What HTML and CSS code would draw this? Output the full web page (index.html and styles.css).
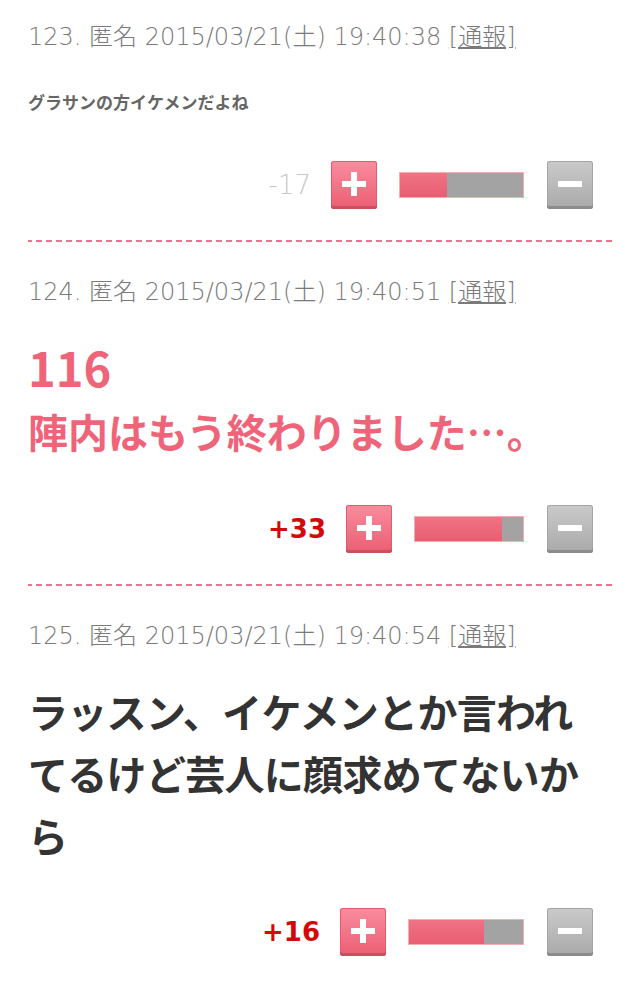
FILE: index.html
```html
<!DOCTYPE html>
<html lang="ja">
<head>
  <meta charset="UTF-8">
  <meta name="viewport" content="width=device-width, initial-scale=1.0">
  <title>コメント</title>
  <link rel="stylesheet" href="styles.css">
</head>
<body>
  <div class="comments">

    <div class="comment">
      <p class="comment-head">123. 匿名 2015/03/21(土) 19:40:38 <a href="#" class="report">[通報]</a></p>
      <div class="comment-body small">グラサンの方イケメンだよね</div>
      <div class="vote">
        <span class="score minus-score">-17</span>
        <button class="btn-plus" type="button"><span class="cross"></span></button>
        <div class="bar" style="width: 125px;"><div class="bar-fill" style="width: 38%;"></div></div>
        <button class="btn-minus" type="button"><span class="dash"></span></button>
      </div>
    </div>

    <div class="comment">
      <p class="comment-head">124. 匿名 2015/03/21(土) 19:40:51 <a href="#" class="report">[通報]</a></p>
      <div class="comment-body pink"><span class="num">116</span>陣内はもう終わりました…。</div>
      <div class="vote">
        <span class="score plus-score">+33</span>
        <button class="btn-plus" type="button"><span class="cross"></span></button>
        <div class="bar" style="width: 110px;"><div class="bar-fill" style="width: 81%;"></div></div>
        <button class="btn-minus" type="button"><span class="dash"></span></button>
      </div>
    </div>

    <div class="comment last">
      <p class="comment-head">125. 匿名 2015/03/21(土) 19:40:54 <a href="#" class="report">[通報]</a></p>
      <div class="comment-body large">ラッスン、イケメンとか言われてるけど芸人に顔求めてないから</div>
      <div class="vote">
        <span class="score plus-score">+16</span>
        <button class="btn-plus" type="button"><span class="cross"></span></button>
        <div class="bar" style="width: 116px;"><div class="bar-fill" style="width: 66%;"></div></div>
        <button class="btn-minus" type="button"><span class="dash"></span></button>
      </div>
    </div>

  </div>
</body>
</html>
```

FILE: styles.css
```css
body {
  margin: 0;
  background: #fff;
  font-family: "Noto Sans CJK JP", "Noto Sans", sans-serif;
}
.comments {
  padding: 0 46px 0 28px;
}
.comment {
  padding: 35px 20px 33px 0;
  margin-right: -20px;
  background-image: linear-gradient(to right, #e9768a 6px, transparent 6px);
  background-size: 10px 2px;
  background-repeat: repeat-x;
  background-position: -2px 100%;
}
.comment:first-child {
  padding-top: 22px;
}
.comment.last {
  background: none;
}
.comment-head {
  margin: 0;
  font-family: "DejaVu Sans", "Noto Sans CJK JP", sans-serif;
  font-size: 24px;
  line-height: 30px;
  font-weight: 200;
  color: #7a7a7a;
  white-space: nowrap;
}
.report {
  color: #7a7a7a;
  text-decoration: underline;
  text-underline-offset: 2px;
}
.comment-body {
  font-weight: 700;
}
.comment-body.small {
  margin-top: 37px;
  padding-bottom: 4px;
  font-size: 17px;
  line-height: 26px;
  color: #666;
}
.comment-body.pink {
  margin-top: 28px;
  font-size: 40px;
  line-height: 64px;
  color: #ef6479;
}
.comment-body.pink .num {
  display: block;
  font-size: 47px;
}
.comment-body.large {
  margin-top: 29px;
  font-size: 40px;
  letter-spacing: -0.7px;
  line-height: 62px;
  color: #333;
}
.vote {
  display: flex;
  justify-content: flex-end;
  align-items: center;
  margin-top: 42px;
}
.score {
  font-family: "DejaVu Sans", sans-serif;
  font-size: 26px;
  line-height: 48px;
  margin-right: 20px;
}
.minus-score {
  color: #c8c8c8;
  font-weight: 200;
}
.plus-score {
  color: #d40808;
  font-weight: 700;
}
.btn-plus, .btn-minus {
  position: relative;
  width: 46px;
  height: 48px;
  padding: 0;
  border: none;
  border-radius: 3px;
  cursor: pointer;
}
.btn-plus {
  background: linear-gradient(#f98d9e, #ec5d72);
  box-shadow: inset 0 -3px 0 #c9505f, inset 0 0 0 1px #e55a6e;
}
.btn-minus {
  margin-left: 23px;
  background: linear-gradient(#cacaca, #a9a9a9);
  box-shadow: inset 0 -3px 0 #8c8c8c, inset 0 0 0 1px #a5a5a5;
}
.cross {
  position: absolute;
  left: 11px;
  top: 11px;
  width: 24px;
  height: 24px;
}
.cross::before, .cross::after {
  content: "";
  position: absolute;
  background: #fff;
}
.cross::before {
  left: 0;
  top: 9px;
  width: 24px;
  height: 6px;
}
.cross::after {
  left: 9px;
  top: 0;
  width: 6px;
  height: 24px;
}
.dash {
  position: absolute;
  left: 11px;
  top: 20px;
  width: 24px;
  height: 6px;
  background: #fff;
}
.bar {
  display: flex;
  height: 26px;
  margin-left: 22px;
  background: #a3a3a3;
  border: 1px solid #efb0b0;
  box-sizing: border-box;
}
.bar-fill {
  height: 100%;
  background: linear-gradient(#f07385, #e95d71);
}
```
